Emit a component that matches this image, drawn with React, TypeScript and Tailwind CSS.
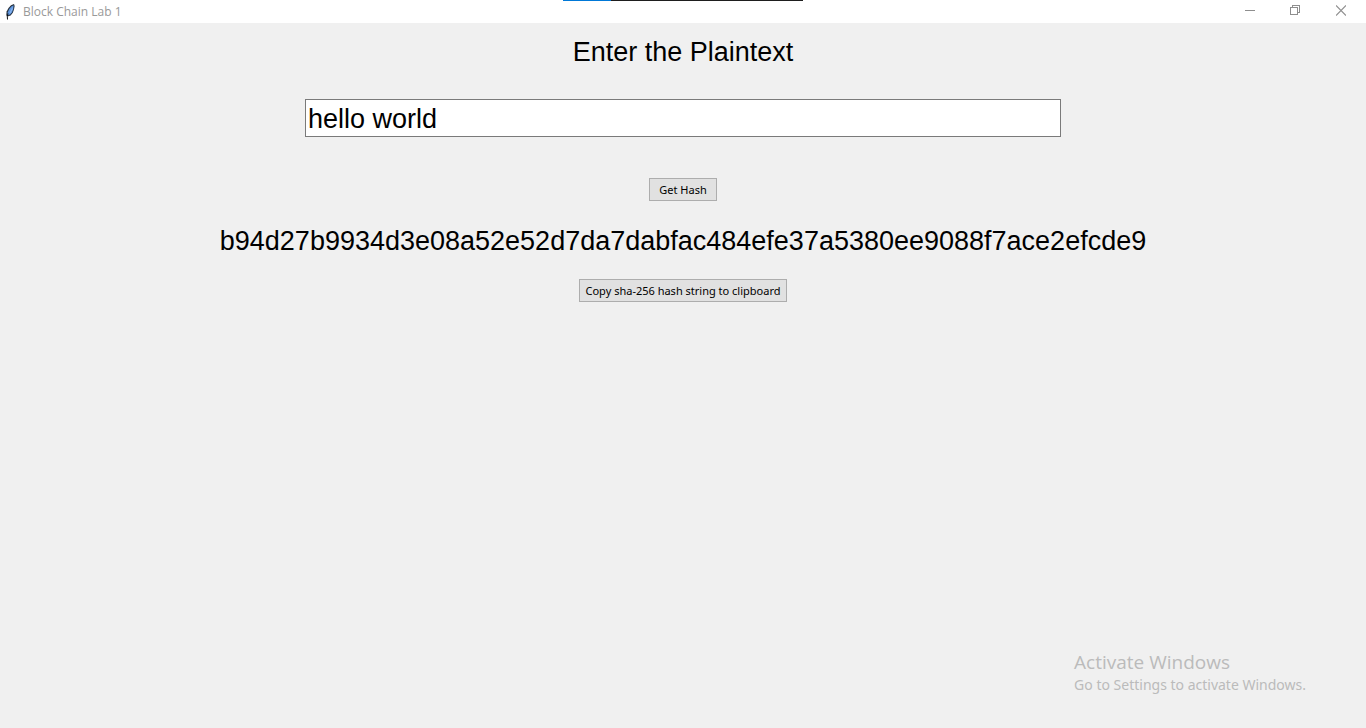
import { useState } from "react";

const buttonClass =
  "h-[23px] border border-[#adadad] bg-[#e1e1e1] font-['Noto_Sans','Open_Sans',sans-serif] text-[11px] leading-[20px] whitespace-nowrap text-black";

function Feather() {
  return (
    <svg className="h-4 w-4" viewBox="0 0 16 16" aria-hidden="true">
      <path
        d="M12 0 9 1.200 6.500 4 4.600 7.500 4.300 11.600 5.500 12.600 8.600 11.400 10.800 8.800 12 5.600 12.600 2Z"
        fill="#27303c"
      />
      <path d="M11.600 1.200 9.300 2.400 7.200 5 5.800 8.200 5.500 11.200 8.200 10.400 10 8.200 11.200 5.200Z" fill="#5b95e0" />
      <path d="M10.900 2.200 8.900 6.200 7 10 8.600 8.800 10.300 5.800Z" fill="#93b9ee" />
      <path d="M6 9.500 5.300 12.200 5.500 15.500" fill="none" stroke="#0c1016" strokeWidth="1" />
    </svg>
  );
}

function TitleBar() {
  const control = "flex h-[21px] w-[46px] items-center justify-center text-[#8e8e8e]";
  return (
    <header className="relative flex h-[23px] items-start justify-between bg-white">
      <div className="flex h-[23px] items-center gap-[5px] pl-[2px]">
        <Feather />
        <h1 className="font-['Open_Sans','Noto_Sans',sans-serif] text-[12px] leading-[23px] text-[#999999]">
          Block Chain Lab 1
        </h1>
      </div>
      <div className="absolute inset-x-0 top-0 flex h-px justify-center">
        <div className="w-12 bg-[#0078d7]" />
        <div className="w-48 bg-[#1e1e1e]" />
      </div>
      <div className="relative flex pr-[2px]">
        <button type="button" aria-label="Minimize" className={control}>
          <svg width="12" height="11" viewBox="0 0 12 11" shapeRendering="crispEdges">
            <path d="M2 5.5h10" stroke="currentColor" />
          </svg>
        </button>
        <button type="button" aria-label="Restore" className={control}>
          <svg width="11" height="11" viewBox="0 0 11 11" fill="none" stroke="currentColor" shapeRendering="crispEdges">
            <path d="M.5 2.500h7v7h-7zM2.500 2.500v-2h7v7h-2" />
          </svg>
        </button>
        <button type="button" aria-label="Close" className={control}>
          <svg width="10" height="11" viewBox="0 0 10 11" stroke="currentColor" strokeWidth="1.200">
            <path d="m0 .5 10 10m0-10-10 10" />
          </svg>
        </button>
      </div>
    </header>
  );
}

async function sha256(text: string) {
  const digest = await crypto.subtle.digest("SHA-256", new TextEncoder().encode(text));
  return Array.from(new Uint8Array(digest), (byte) => byte.toString(16).padStart(2, "0")).join("");
}

export default function App() {
  const [text, setText] = useState("hello world");
  const [hash, setHash] = useState("b94d27b9934d3e08a52e52d7da7dabfac484efe37a5380ee9088f7ace2efcde9");

  return (
    <div className="flex min-h-screen flex-col bg-[#f0f0f0] font-['Liberation_Sans',Arial,sans-serif] text-black">
      <TitleBar />
      <main className="flex flex-1 flex-col items-center pt-2">
        <label htmlFor="plaintext" className="text-[27px] leading-[42px]">
          Enter the Plaintext
        </label>
        <input
          id="plaintext"
          type="text"
          value={text}
          onChange={(event) => setText(event.target.value)}
          className="mt-[26px] h-[38px] w-[756px] max-w-full border border-[#7a7a7a] bg-white px-[2px] pt-[2px] text-[27px] leading-[34px] outline-none"
        />
        <button type="button" onClick={async () => setHash(await sha256(text))} className={`${buttonClass} mt-[41px] min-w-[68px] px-[6px]`}>
          Get Hash
        </button>
        <output htmlFor="plaintext" className="mt-5 text-[27px] leading-[40px]">
          {hash}
        </output>
        <button type="button" onClick={() => navigator.clipboard.writeText(hash)} className={`${buttonClass} mt-[18px] px-[6px]`}>
          Copy sha-256 hash string to clipboard
        </button>
      </main>
      <aside className="self-end pr-[60px] pb-8 font-['Noto_Sans','Open_Sans',sans-serif] text-[#bbbbbb]">
        <p className="font-['Open_Sans','Noto_Sans',sans-serif] text-[19px] leading-[24px]">Activate Windows</p>
        <p className="text-[14px] leading-[22px]">Go to Settings to activate Windows.</p>
      </aside>
    </div>
  );
}
